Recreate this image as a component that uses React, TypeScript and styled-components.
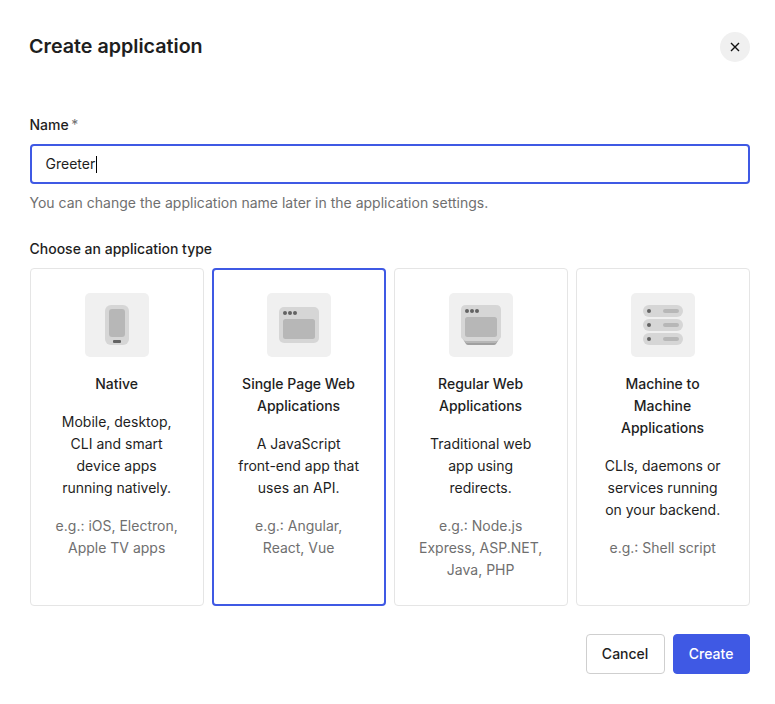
import React from "react";
import styled, { createGlobalStyle } from "styled-components";

const Global = createGlobalStyle`
  * { box-sizing: border-box; }
  body { margin: 0; background: #fff; color: #1e1e1e; font: 14px/22px Inter, sans-serif; }
  h1, h2, p { margin: 0; }
`;
const Dialog = styled.main`
  width: 775px; height: 704px; padding: 30px 25px 0 30px;
  display: flex; flex-direction: column;
`;
const Header = styled.header`
  display: flex; justify-content: space-between; align-items: center; height: 34px;
`;
const Title = styled.h1`
  && { font-size: 18.75px; line-height: 30px; font-weight: 600; margin: 0 0 0 -1px; }
  transform: scaleX(1.05); transform-origin: left center;
`;
const Close = styled.button`
  width: 30px; height: 30px; padding: 0; border: 0; border-radius: 50%; background: #f0f0f0;
  display: grid; place-items: center; color: #111;
`;
const Label = styled.label`
  font-weight: 500; margin-top: 50px; line-height: 22px; text-indent: -0.5px;
  span { color: #6f6f6f; font-weight: 400; margin-left: 2.5px; }
`;
const Field = styled.div`
  height: 40px; margin-top: 8px; padding: 0 13.5px; border: 2px solid #3f59e4; border-radius: 4px;
  display: flex; align-items: center;
`;
const Caret = styled.i`width: 1px; height: 17px; margin-left: 0.5px; background: #000;`;
const Hint = styled.p`&& { margin-top: 8px; color: #6f6f6f; text-indent: -0.5px; letter-spacing: 0.008px; }`;
const GroupLabel = styled.h2`
  && { font-size: 14px; line-height: 22px; font-weight: 500; margin-top: 24px; text-indent: -0.5px; }
`;
const Cards = styled.div`
  display: grid; grid-template-columns: repeat(4, 174px); gap: 8px; margin-top: 8px; height: 338px;
`;
const Card = styled.article<{ $selected?: boolean }>`
  border: ${p => p.$selected ? "2px solid #3f59e4" : "1px solid #e5e5e5"};
  padding: ${p => p.$selected ? "23px 0" : "24px 0"};
  border-radius: 4px; display: flex; flex-direction: column; align-items: center; text-align: center;
`;
const Tile = styled.svg`display: block; width: 64px; height: 64px; flex: none; margin-bottom: 16px;`;
const Name = styled.h2`
  font-size: 14px; line-height: 22px; font-weight: 500; white-space: pre-line; padding-right: 0.9px;
`;
const Text = styled.p<{ $muted?: boolean }>`
  margin-top: 16px; padding-right: 0.7px; white-space: pre-line; color: ${p => p.$muted ? "#6f6f6f" : "#1e1e1e"};
`;
const Footer = styled.footer`display: flex; justify-content: flex-end; gap: 8px; margin-top: 28px;`;
const Button = styled.button<{ $primary?: boolean }>`
  width: ${p => p.$primary ? 77 : 79}px; height: 40px; padding: 0 0.8px 0 0; border-radius: 4px;
  border: 1px solid ${p => p.$primary ? "#3f59e4" : "#cfcfcf"};
  background: ${p => p.$primary ? "#3f59e4" : "#fff"}; color: ${p => p.$primary ? "#fff" : "#1e1e1e"};
  font: 500 14px/22px Inter, sans-serif;
`;

const Dots = () => <g fill="#636363"><circle cx="18" cy="20" r="2"/><circle cx="23" cy="20" r="2"/><circle cx="28" cy="20" r="2"/></g>;
const icons = [
  <><rect x="20" y="12" width="24" height="40" rx="6" fill="#d6d6d6"/><rect x="24" y="16" width="16" height="28" rx="3" fill="#b7b7b7"/><rect x="28" y="47" width="8" height="3" rx="1" fill="#636363"/></>,
  <><rect x="12" y="14" width="40" height="36" rx="5" fill="#d6d6d6"/><Dots/><rect x="16" y="26" width="32" height="20" rx="2.5" fill="#b7b7b7"/></>,
  <><path d="M14 46h36l-3 5q-.7 1-2 1H19q-1.3 0-2-1z" fill="#a0a0a0"/><path d="M14 46h36l-3 4H17z" fill="#b7b7b7"/><path d="M17 12h30q5 0 5 5v26.5q0 1-.7 1.8L49.5 47q-1 1-2.5 1H17q-1.5 0-2.5-1l-1.8-1.7q-.7-.8-.7-1.8V17q0-5 5-5" fill="#d6d6d6"/><g transform="translate(0 -2)"><Dots/></g><rect x="16" y="24" width="32" height="20" rx="2.5" fill="#b7b7b7"/></>,
  <>{[12, 26, 40].map(y => <g key={y}><rect x="12" y={y} width="40" height="12" rx="6" fill="#d6d6d6"/><circle cx="18" cy={y + 6} r="2" fill="#636363"/><rect x="32" y={y + 4} width="16" height="4" rx="2" fill="#b7b7b7"/></g>)}</>
];
const types = [
  ["Native", "Mobile, desktop,\nCLI and smart\ndevice apps\nrunning natively.", "e.g.: iOS, Electron,\nApple TV apps"],
  ["Single Page Web\nApplications", "A JavaScript\nfront-end app that\nuses an API.", "e.g.: Angular,\nReact, Vue"],
  ["Regular Web\nApplications", "Traditional web\napp using\nredirects.", "e.g.: Node.js\nExpress, ASP.NET,\nJava, PHP"],
  ["Machine to\nMachine\nApplications", "CLIs, daemons or\nservices running\non your backend.", "e.g.: Shell script"]
];

export default function App() {
  return <><Global/><Dialog>
    <Header><Title>Create application</Title><Close aria-label="Close"><svg width="10" height="10" viewBox="0 0 10 10" stroke="currentColor" strokeWidth="1.4"><path d="m1 1 8 8M9 1 1 9"/></svg></Close></Header>
    <Label>Name<span>*</span></Label>
    <Field>Greeter<Caret/></Field>
    <Hint>You can change the application name later in the application settings.</Hint>
    <GroupLabel>Choose an application type</GroupLabel>
    <Cards>{types.map(([name, text, example], i) => <Card key={name} $selected={i === 1}>
      <Tile viewBox="0 0 64 64"><rect width="64" height="64" rx="5" fill="#f0f0f0"/>{icons[i]}</Tile>
      <Name>{name}</Name><Text>{text}</Text><Text $muted>{example}</Text>
    </Card>)}</Cards>
    <Footer><Button>Cancel</Button><Button $primary>Create</Button></Footer>
  </Dialog></>;
}
